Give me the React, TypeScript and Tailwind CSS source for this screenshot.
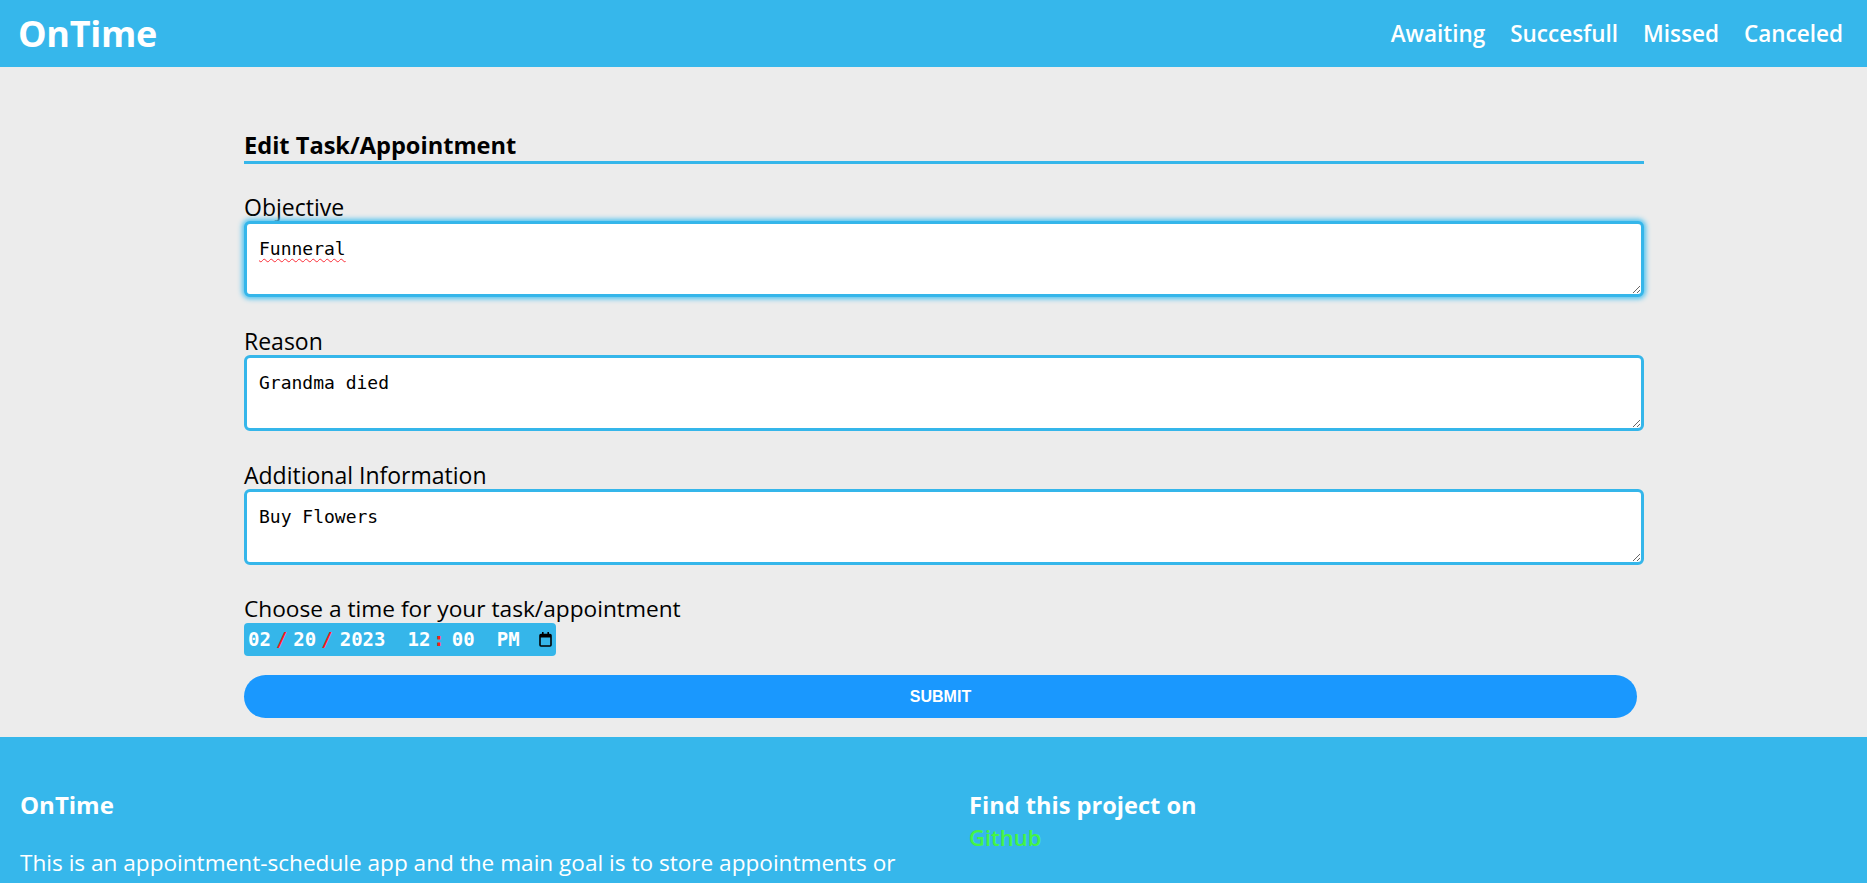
import React from "react";

const sans = "font-['Open_Sans','Noto_Sans',sans-serif]";

function CalendarIcon() {
  return (
    <svg width="13" height="15" viewBox="0 0 13 15" fill="none">
      <rect x="1" y="2.5" width="11" height="11.5" rx="1" stroke="#000" strokeWidth="1.6" />
      <rect x="1" y="2.5" width="11" height="3" fill="#000" />
      <rect x="3" y="0" width="1.6" height="3" fill="#000" />
      <rect x="8.4" y="0" width="1.6" height="3" fill="#000" />
    </svg>
  );
}

function Field({ label, value, focused }: { label: string; value: string; focused?: boolean }) {
  return (
    <div className="flex flex-col">
      <label className="text-[23px] leading-[28px] text-black">{label}</label>
      <textarea
        defaultValue={value}
        spellCheck={false}
        className={
          "h-[76px] w-[1400px] rounded-[6px] border-[3px] border-[#35b6ea] bg-white px-[12px] py-[14px] font-['DejaVu_Sans_Mono','Liberation_Mono',monospace] text-[18px] leading-[21px] text-black outline-none " +
          (focused
            ? "underline decoration-wavy decoration-red-500 decoration-[1px] underline-offset-[3px] shadow-[0_0_5px_2px_#4fc3f0]"
            : "")
        }
      />
    </div>
  );
}

export default function App() {
  return (
    <div className={`${sans} min-h-screen bg-[#ececec]`}>
      <header className="flex h-[67px] items-center justify-between bg-[#36b7eb] pl-[18px] pr-[24px] text-white">
        <div className="text-[36px] font-bold leading-none tracking-[-0.3px]">OnTime</div>
        <nav className="flex items-center gap-[25px] text-[22.5px] font-semibold">
          <a>Awaiting</a>
          <a>Succesfull</a>
          <a>Missed</a>
          <a>Canceled</a>
        </nav>
      </header>

      <main className="pb-[19px] pl-[244px] pt-[62px]">
        <div className="flex w-[1400px] flex-col">
          <h2 className="border-b-[3px] border-[#35b6ea] text-[23.6px] font-bold leading-[32px] text-black">
            Edit Task/Appointment
          </h2>
          <div className="mt-[29px] flex flex-col gap-[30px]">
            <Field label="Objective" value="Funneral" focused />
            <Field label="Reason" value="Grandma died" />
            <Field label="Additional Information" value="Buy Flowers" />
          </div>
          <div className="mt-[30px] text-[22.7px] leading-[28px] text-black">
            Choose a time for your task/appointment
          </div>
          <div className="flex h-[33px] w-[312px] items-center rounded-[4px] bg-[#35b6ea] pl-[4px] font-['DejaVu_Sans_Mono','Liberation_Mono',monospace] text-[19px] font-bold text-white">
            <span>02</span>
            <span className="ml-[5px] text-[#ff1a1a]">/</span>
            <span className="ml-[6px]">20</span>
            <span className="ml-[5px] text-[#ff1a1a]">/</span>
            <span className="ml-[7px]">2023</span>
            <span className="ml-[22px]">12</span>
            <span className="ml-[3px] text-[#ff1a1a]">:</span>
            <span className="ml-[7px]">00</span>
            <span className="ml-[22px]">PM</span>
            <span className="ml-[19px] flex items-center">
              <CalendarIcon />
            </span>
          </div>
          <button className="mt-[19px] h-[43px] w-[1393px] rounded-full bg-[#1a98fe] font-['Liberation_Sans',Arial,sans-serif] text-[16px] font-bold text-white">
            SUBMIT
          </button>
        </div>
      </main>

      <footer className="flex bg-[#36b7eb] pb-[60px] pt-[52px] text-white">
        <div className="w-[949px] pl-[20px] pr-[20px]">
          <h3 className="text-[24px] font-bold leading-[32px]">OnTime</h3>
          <p className="mt-[26px] text-[22.6px] leading-[32px]">
            This is an appointment-schedule app and the main goal is to store appointments or tasks
          </p>
        </div>
        <div className="pl-[20px]">
          <h3 className="text-[23.6px] font-bold leading-[32px]">Find this project on</h3>
          <a className="text-[22px] font-semibold leading-[32px] text-[#45f445]">Github</a>
        </div>
      </footer>
    </div>
  );
}
